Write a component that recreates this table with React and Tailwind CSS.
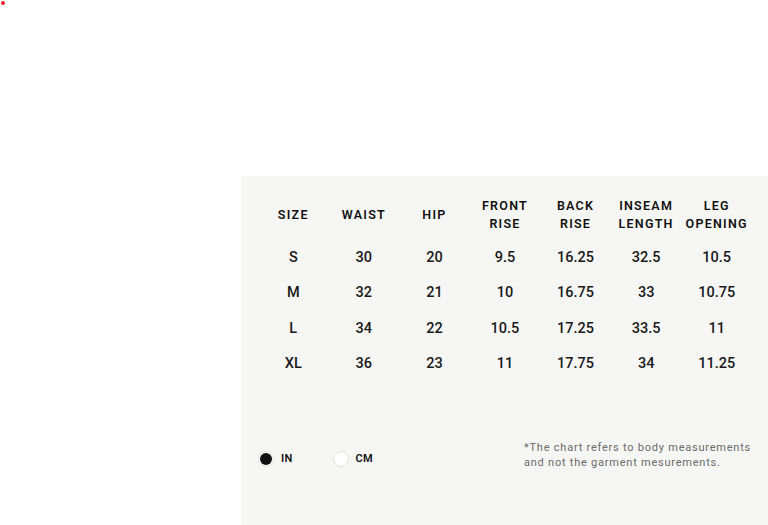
import { useState } from "react";

const headers = [
  ["SIZE"],
  ["WAIST"],
  ["HIP"],
  ["FRONT", "RISE"],
  ["BACK", "RISE"],
  ["INSEAM", "LENGTH"],
  ["LEG", "OPENING"],
];

const rows = [
  ["S", "30", "20", "9.5", "16.25", "32.5", "10.5"],
  ["M", "32", "21", "10", "16.75", "33", "10.75"],
  ["L", "34", "22", "10.5", "17.25", "33.5", "11"],
  ["XL", "36", "23", "11", "17.75", "34", "11.25"],
];

function Radio({ label, checked, onClick }) {
  return (
    <button onClick={onClick} className="flex items-center gap-[7px]">
      <span className="w-[16px] h-[16px] rounded-full bg-white border border-[#e2e2e2] flex items-center justify-center">
        {checked && <span className="w-[12px] h-[12px] rounded-full bg-[#111]" />}
      </span>
      <span className="text-[11px] font-semibold tracking-wide text-[#111]">{label}</span>
    </button>
  );
}

export default function App() {
  const [unit, setUnit] = useState("in");

  return (
    <div
      className="relative w-[768px] h-[525px] bg-white overflow-hidden"
      style={{ fontFamily: "Roboto, 'Liberation Sans', sans-serif" }}
    >
      <span className="absolute left-[1px] top-[1px] w-[4px] h-[4px] rounded-full bg-[#e8242b]" />
      <div className="h-[176px]" />
      <div className="flex h-[349px]">
        <div className="w-[241px]" />
        <div className="flex-1 bg-[#f6f6f4] pt-[21px] pl-[17px] pr-[16px] flex flex-col">
          <div className="grid grid-cols-7 h-[36px] items-center">
            {headers.map((h) => (
              <div
                key={h[0]}
                className="text-center text-[12.5px] leading-[18px] font-semibold tracking-[0.1em] text-[#111]"
              >
                {h.map((l) => (
                  <div key={l}>{l}</div>
                ))}
              </div>
            ))}
          </div>
          <div className="mt-[7px]">
            {rows.map((r) => (
              <div key={r[0]} className="grid grid-cols-7 h-[35.5px] items-center">
                {r.map((c, i) => (
                  <div key={i} className="text-center text-[14.5px] font-medium text-[#1a1a1a]">
                    {c}
                  </div>
                ))}
              </div>
            ))}
          </div>
          <div className="flex items-start mt-[58px]">
            <div className="flex items-center gap-[40px] mt-[11px]">
              <Radio label="IN" checked={unit === "in"} onClick={() => setUnit("in")} />
              <Radio label="CM" checked={unit === "cm"} onClick={() => setUnit("cm")} />
            </div>
            <p className="ml-auto mr-[1px] whitespace-nowrap text-[11px] leading-[15px] tracking-[0.07em] text-[#6b6b6b]">
              *The chart refers to body measurements
              <br />
              and not the garment mesurements.
            </p>
          </div>
        </div>
      </div>
    </div>
  );
}
